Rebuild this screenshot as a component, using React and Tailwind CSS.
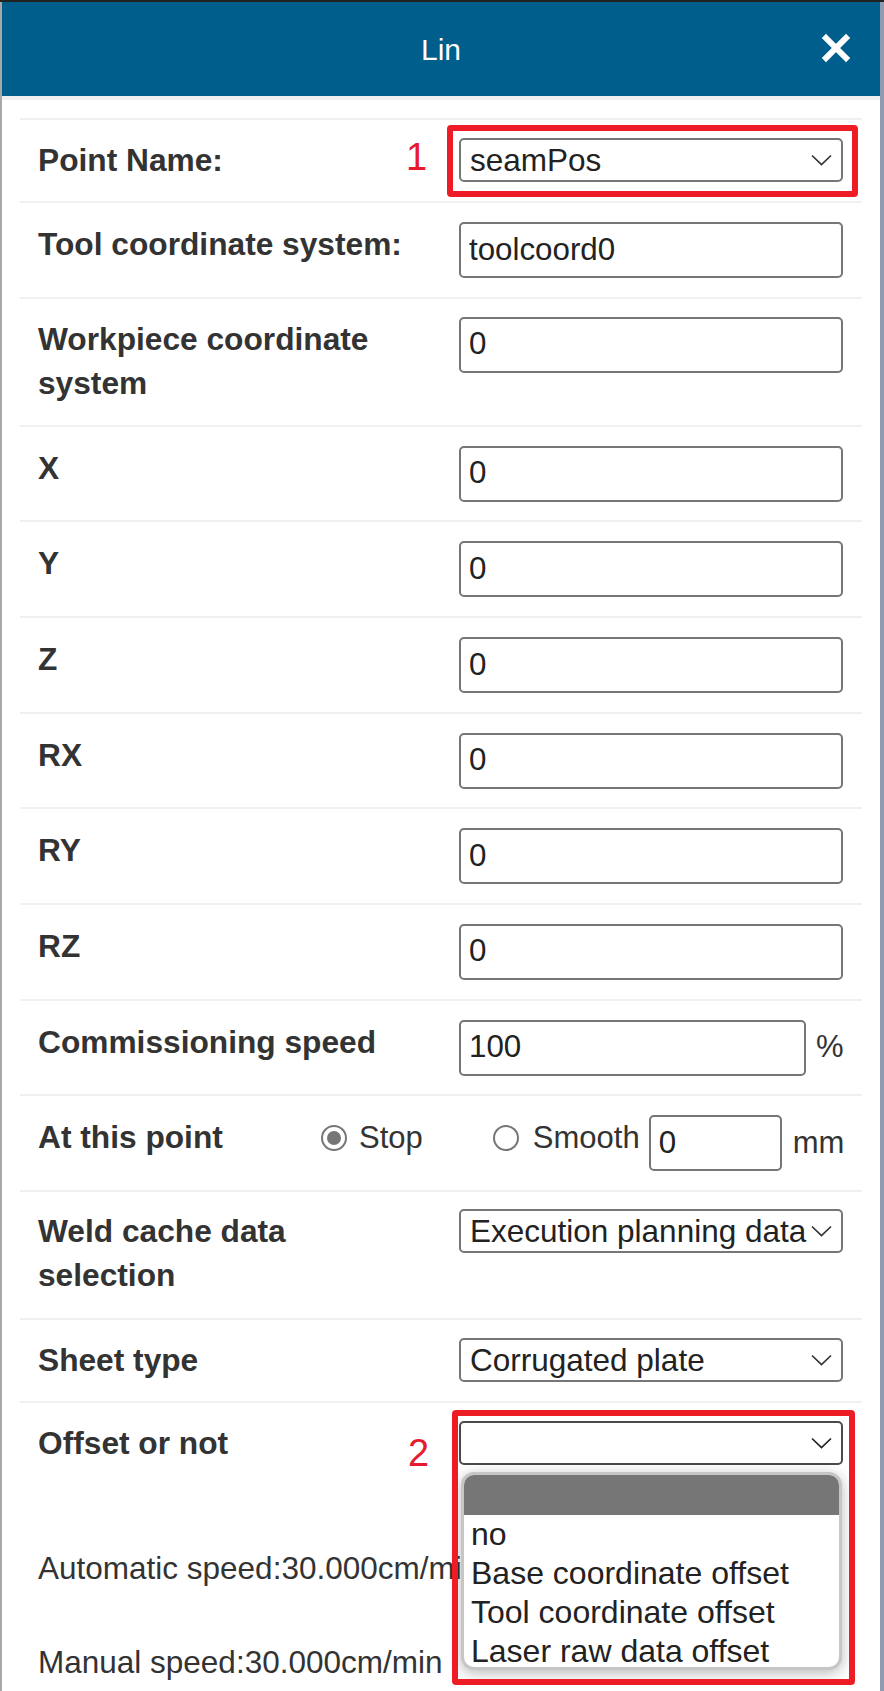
import React from "react";

const Chevron = ({ color = "#333" }) => (
  <svg width="21" height="12" viewBox="0 0 21 12" fill="none">
    <path d="M1 1.5 L10.5 10.5 L20 1.5" stroke={color} strokeWidth="1.7" />
  </svg>
);

const Label = ({ children, w = "w-[421px]" }) => (
  <div className={`${w} shrink-0 font-bold text-[31.7px] leading-[44px] text-[#333]`}>{children}</div>
);

const TextBox = ({ value, w = "w-[384px]" }) => (
  <div className={`${w} h-[56px] shrink-0 border-2 border-[#767676] rounded-[5px] pl-[8px] flex items-center text-[31.3px] text-[#222] bg-white`}>
    {value}
  </div>
);

const SelectBox = ({ value, dark }) => (
  <div
    className={`w-[384px] h-[44px] shrink-0 border-2 ${dark ? "border-[#4a4a4a]" : "border-[#767676]"} rounded-[5px] pl-[9px] pr-[9px] flex items-center bg-white`}
  >
    <span className="flex-1 overflow-hidden whitespace-nowrap text-[31.5px] leading-[40px] text-[#222] pr-[6px]">{value}</span>
    <Chevron color={dark ? "#222" : "#333"} />
  </div>
);

const InputRow = ({ label, value }) => (
  <div className="flex items-start border-t-2 border-[#f0f0f0] pl-[18px] pr-[19px] pt-[19px] pb-[18.67px]">
    <Label>{label}</Label>
    <TextBox value={value} />
  </div>
);

const SelectRow = ({ label, value, dark, pb = "pb-[19px]" }) => (
  <div className={`flex items-start border-t-2 border-[#f0f0f0] pl-[18px] pr-[19px] pt-[18px] ${pb}`}>
    <Label>{label}</Label>
    <SelectBox value={value} dark={dark} />
  </div>
);

const Radio = ({ checked }) => (
  <div className="w-[26px] h-[26px] rounded-full border-2 border-[#767676] flex items-center justify-center bg-white">
    {checked && <div className="w-[14px] h-[14px] rounded-full bg-[#767676]" />}
  </div>
);

export default function App() {
  return (
    <div className="relative w-[884px] h-[1691px] overflow-hidden bg-[#a8a8a8] font-['Liberation_Sans',Arial,sans-serif]">
      <div className="h-[2px] bg-[#222]" />
      <div className="flex h-[1689px]">
        <div className="w-[2px] bg-[#a8a8a8]" />
        <div className="w-[878px] bg-white flex flex-col">
          {/* header */}
          <div className="h-[94px] bg-[#005e8c] flex items-center">
            <div className="w-[59px]" />
            <div className="flex-1 text-center text-white text-[30px]">Lin</div>
            <div className="w-[30px] h-[30px] mr-[29px] -mt-[2px]">
              <svg width="30" height="30" viewBox="0 0 30 30">
                <path d="M5 5 L25 25 M25 5 L5 25" stroke="#fff" strokeWidth="6" strokeLinecap="square" />
              </svg>
            </div>
          </div>
          <div className="h-[4px] bg-[#f0f0f0]" />

          <div className="px-[18px] pt-[18px] flex flex-col">
            <SelectRow label="Point Name:" value="seamPos" />
            <InputRow label="Tool coordinate system:" value="toolcoord0" />
            <div className="flex items-start border-t-2 border-[#f0f0f0] pl-[18px] pr-[19px] pt-[18px] pb-[20px]">
              <Label>
                Workpiece coordinate
                <br />
                system
              </Label>
              <TextBox value="0" />
            </div>
            <InputRow label="X" value="0" />
            <InputRow label="Y" value="0" />
            <InputRow label="Z" value="0" />
            <InputRow label="RX" value="0" />
            <InputRow label="RY" value="0" />
            <InputRow label="RZ" value="0" />
            <div className="flex items-start border-t-2 border-[#f0f0f0] pl-[18px] pr-[19px] pt-[19px] pb-[18.67px]">
              <Label>Commissioning speed</Label>
              <TextBox value="100" w="w-[347px]" />
              <div className="h-[56px] flex items-center ml-[10px] text-[31px] text-[#333]">%</div>
            </div>
            <div className="flex items-start border-t-2 border-[#f0f0f0] pl-[18px] pr-[19px] pt-[19px] pb-[18.67px]">
              <Label w="w-[283px]">At this point</Label>
              <div className="h-[46px] flex items-center">
                <Radio checked />
                <span className="ml-[12px] text-[31px] text-[#333]">Stop</span>
                <div className="ml-[70px]">
                  <Radio />
                </div>
                <span className="ml-[14px] text-[31px] text-[#333]">Smooth</span>
              </div>
              <div className="ml-[9px]">
                <TextBox value="0" w="w-[133px]" />
              </div>
              <div className="h-[56px] flex items-center ml-[11px] text-[31px] text-[#333]">mm</div>
            </div>
            <div className="flex items-start border-t-2 border-[#f0f0f0] pl-[18px] pr-[19px] pt-[17px] pb-[21px]">
              <Label>
                Weld cache data
                <br />
                selection
              </Label>
              <SelectBox value="Execution planning data" />
            </div>
            <SelectRow label="Sheet type" value="Corrugated plate" />
            <SelectRow label="Offset or not" value="" dark pb="pb-[19px]" />
            <div className="pl-[18px] mt-[62px] text-[31.5px] leading-[44px] text-[#333] whitespace-nowrap">
              Automatic speed:30.000cm/min
            </div>
            <div className="pl-[18px] mt-[50px] text-[31.5px] leading-[44px] text-[#333] whitespace-nowrap">
              Manual speed:30.000cm/min
            </div>
          </div>
        </div>
        <div className="w-[4px] bg-[#8f9bb0]" />
      </div>

      {/* annotation 1 */}
      <div className="absolute left-[447px] top-[125px] w-[411px] h-[72px] border-[6px] border-[#ee1c25] rounded-[4px]" />
      <div className="absolute left-[406px] top-[134px] text-[38px] leading-[46px] text-[#e8192c]">1</div>

      {/* dropdown popup */}
      <div className="absolute left-[461px] top-[1472px] w-[381px] h-[198px] bg-white border-[3px] border-[#c6c6c6] rounded-[13px] overflow-hidden shadow-[0_3px_14px_rgba(0,0,0,0.28)]">
        <div className="h-[40px] bg-[#767676]" />
        {["no", "Base coordinate offset", "Tool coordinate offset", "Laser raw data offset"].map((o) => (
          <div key={o} className="h-[39px] pl-[7px] text-[32px] leading-[39px] text-[#222] whitespace-nowrap">
            {o}
          </div>
        ))}
      </div>

      {/* annotation 2 */}
      <div className="absolute left-[452px] top-[1410px] w-[403px] h-[275px] border-[6px] border-[#ee1c25] rounded-[4px]" />
      <div className="absolute left-[408px] top-[1430px] text-[38px] leading-[46px] text-[#e8192c]">2</div>
    </div>
  );
}
